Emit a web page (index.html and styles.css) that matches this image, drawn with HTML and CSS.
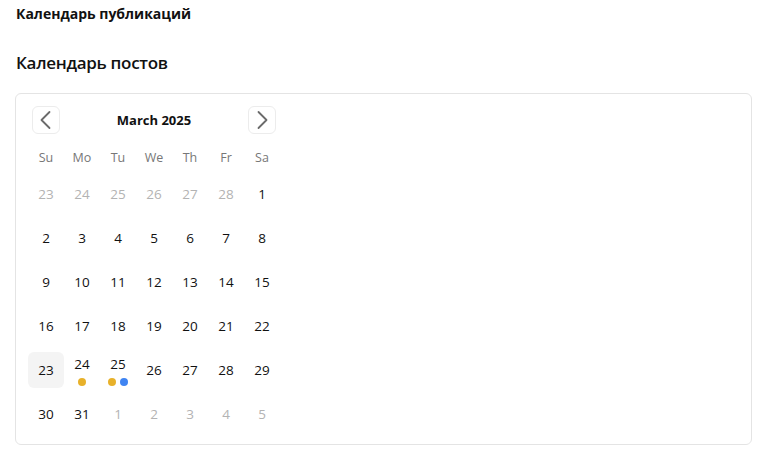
FILE: index.html
```html
<!DOCTYPE html>
<html lang="ru">
<head>
<meta charset="utf-8">
<title>Календарь публикаций</title>
<link rel="stylesheet" href="styles.css">
</head>
<body>
<div class="page">
  <h1 class="page-title">Календарь публикаций</h1>
  <h2 class="section-title">Календарь постов</h2>
  <div class="card">
    <div class="calendar">
      <div class="nav">
        <button class="nav-btn" aria-label="Previous month">
          <svg width="24" height="24" viewBox="0 0 24 24"><path d="M15.5 4l-8 8 8 8" fill="none" stroke="#6b6b6b" stroke-width="1.8" stroke-linecap="round" stroke-linejoin="round"/></svg>
        </button>
        <div class="month">March 2025</div>
        <button class="nav-btn" aria-label="Next month">
          <svg width="24" height="24" viewBox="0 0 24 24"><path d="M8.5 4l8 8-8 8" fill="none" stroke="#6b6b6b" stroke-width="1.8" stroke-linecap="round" stroke-linejoin="round"/></svg>
        </button>
      </div>
      <div class="weekdays">
        <span>Su</span><span>Mo</span><span>Tu</span><span>We</span><span>Th</span><span>Fr</span><span>Sa</span>
      </div>
      <div class="days">
        <div class="day out">23</div><div class="day out">24</div><div class="day out">25</div><div class="day out">26</div><div class="day out">27</div><div class="day out">28</div><div class="day">1</div>
        <div class="day">2</div><div class="day">3</div><div class="day">4</div><div class="day">5</div><div class="day">6</div><div class="day">7</div><div class="day">8</div>
        <div class="day">9</div><div class="day">10</div><div class="day">11</div><div class="day">12</div><div class="day">13</div><div class="day">14</div><div class="day">15</div>
        <div class="day">16</div><div class="day">17</div><div class="day">18</div><div class="day">19</div><div class="day">20</div><div class="day">21</div><div class="day">22</div>
        <div class="day today">23</div>
        <div class="day has-events"><span class="num">24</span><span class="dots"><i class="dot yellow"></i></span></div>
        <div class="day has-events"><span class="num">25</span><span class="dots"><i class="dot yellow"></i><i class="dot blue"></i></span></div>
        <div class="day">26</div><div class="day">27</div><div class="day">28</div><div class="day">29</div>
        <div class="day">30</div><div class="day">31</div><div class="day out">1</div><div class="day out">2</div><div class="day out">3</div><div class="day out">4</div><div class="day out">5</div>
      </div>
    </div>
  </div>
</div>
</body>
</html>
```

FILE: styles.css
```css
* { box-sizing: border-box; }
html, body { margin: 0; padding: 0; background: #ffffff; }
body {
  font-family: "Open Sans", "Noto Sans", "DejaVu Sans", sans-serif;
  color: #111111;
}
.page {
  padding: 4px 7px 0 15px;
}
.page-title {
  margin: 0 0 0 1px;
  font-size: 14px;
  line-height: 20px;
  font-weight: 700;
}
.section-title {
  margin: 27px 0 0 1px;
  font-size: 17px;
  letter-spacing: -0.3px;
  line-height: 24px;
  font-weight: 600;
}
.card {
  margin-top: 18px;
  border: 1px solid #e4e4e4;
  border-radius: 6px;
  padding: 12px 12px 11px 12px;
  height: 352px;
}
.calendar {
  width: 252px;
}
.nav {
  display: flex;
  align-items: center;
  justify-content: space-between;
  padding: 0 4px;
  height: 28px;
}
.nav-btn {
  width: 28px;
  height: 28px;
  padding: 0;
  display: flex;
  align-items: center;
  justify-content: center;
  background: #ffffff;
  border: 1px solid #ececec;
  border-radius: 6px;
}
.month {
  font-size: 13px;
  font-weight: 700;
  color: #111111;
}
.weekdays {
  display: grid;
  grid-template-columns: repeat(7, 36px);
  margin-top: 13px;
  height: 20px;
  align-items: center;
  font-size: 12.5px;
  color: #777777;
}
.weekdays span { text-align: center; }
.days {
  display: grid;
  grid-template-columns: repeat(7, 36px);
  grid-auto-rows: 36px;
  row-gap: 8px;
  margin-top: 9px;
}
.day {
  display: flex;
  flex-direction: column;
  align-items: center;
  justify-content: center;
  font-size: 13.5px;
  color: #111111;
  border-radius: 6px;
}
.day.out { color: #b3b3b3; }
.day.today { background: #f4f4f4; }
.day.has-events { justify-content: flex-start; padding-top: 3px; }
.num { line-height: 18px; }
.dots {
  display: flex;
  gap: 4px;
  margin-top: 5px;
}
.dot {
  display: block;
  width: 8px;
  height: 8px;
  border-radius: 50%;
}
.dot.yellow { background: #e8b12a; }
.dot.blue { background: #3f84f2; }
```
